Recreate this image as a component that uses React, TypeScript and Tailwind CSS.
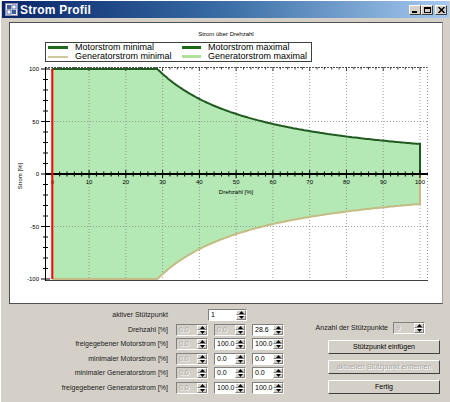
import React from 'react';

// Chart scale (page coordinates)
const X = (v: number) => 52.3 + v * 3.677;
const Y = (v: number) => 174 - v * 1.05;
const upper = (v: number) => (v <= 28.6 ? 100 : 2860 / v);

const range = (a: number, b: number, step: number) => {
  const out: number[] = [];
  for (let v = a; v <= b + 0.001; v += step) out.push(v);
  return out;
};

const SpinArrows = () => (
  <div className="flex flex-col w-[10px] h-full">
    <div className="flex-1 flex items-center justify-center bg-[#d4d0c8] border-t border-l border-t-white border-l-white border-b border-r border-b-[#808080] border-r-[#808080]">
      <svg width="5" height="3" viewBox="0 0 5 3"><path d="M0 3 L2.5 0 L5 3 Z" fill="#000" /></svg>
    </div>
    <div className="flex-1 flex items-center justify-center bg-[#d4d0c8] border-t border-l border-t-white border-l-white border-b border-r border-b-[#808080] border-r-[#808080]">
      <svg width="5" height="3" viewBox="0 0 5 3"><path d="M0 0 L2.5 3 L5 0 Z" fill="#000" /></svg>
    </div>
  </div>
);

const SpinBox = ({ value, disabled, className }: { value: string; disabled?: boolean; className?: string }) => (
  <div
    className={`flex h-[12px] border-t border-l border-t-[#808080] border-l-[#808080] border-b border-r border-b-white border-r-white ${
      disabled ? 'bg-[#d4d0c8]' : 'bg-white'
    } ${className ?? 'w-[32px]'}`}
  >
    <div
      className={`flex-1 pl-[2px] text-[7px] leading-[10px] overflow-hidden ${
        disabled ? 'text-[#a8a8a8] [text-shadow:1px_1px_0_#fff]' : 'text-black'
      }`}
    >
      {value}
    </div>
    <SpinArrows />
  </div>
);

const WinButton = ({ label, disabled }: { label: string; disabled?: boolean }) => (
  <div className="h-[14px] w-[112px] bg-[#d4d0c8] border-t border-l border-t-white border-l-white border-b border-r border-b-[#404040] border-r-[#404040] flex items-center justify-center">
    <span
      className={`text-[7px] leading-[8px] ${
        disabled ? 'text-[#a8a8a8] [text-shadow:1px_1px_0_#fff]' : 'text-black'
      }`}
    >
      {label}
    </span>
  </div>
);

const CaptionButton = ({ children }: { children: React.ReactNode }) => (
  <div className="w-[12px] h-[10px] bg-[#d4d0c8] border-t border-l border-t-white border-l-white border-b border-r border-b-[#404040] border-r-[#404040] flex items-center justify-center">
    {children}
  </div>
);

const rows = [
  { label: 'Drehzahl [%]', values: ['0.0', '0.0', '28.6'] },
  { label: 'freigegebener Motorstrom [%]', values: ['0.0', '100.0', '100.0'] },
  { label: 'minimaler Motorstrom [%]', values: ['0.0', '0.0', '0.0'] },
  { label: 'minimaler Generatorstrom [%]', values: ['0.0', '0.0', '0.0'] },
  { label: 'freigegebener Generatorstrom [%]', values: ['0.0', '100.0', '100.0'] },
];

const Chart = () => {
  const pts = range(0, 100, 0.5);
  const upperPts = pts.map((v) => `${X(v).toFixed(1)},${Y(upper(v)).toFixed(1)}`);
  const lowerPts = pts.map((v) => `${X(v).toFixed(1)},${Y(-upper(v)).toFixed(1)}`);
  const fill = `M${upperPts.join(' L')} L${lowerPts.slice().reverse().join(' L')} Z`;
  const upLine = `M${upperPts.join(' L')} L${X(100)},${Y(0)}`;
  const lowLine = `M${lowerPts.join(' L')} L${X(100)},${Y(0)}`;

  return (
    <svg width="431" height="240" viewBox="0 0 431 240" className="block">
      <g transform="translate(-10,-62)">
        {/* fill */}
        <path d={fill} fill="#b4e8b4" />
        {/* grid */}
        {range(0, 100, 10).map((v) => (
          <line key={`gx${v}`} x1={X(v)} x2={X(v)} y1={67} y2={281} stroke="#8a8a8a" strokeWidth="1" strokeDasharray="1 2" opacity="0.8" />
        ))}
        {[50, -50].map((v) => (
          <line key={`gy${v}`} x1={45} x2={428} y1={Y(v)} y2={Y(v)} stroke="#8a8a8a" strokeWidth="1" strokeDasharray="1 2" opacity="0.8" />
        ))}
        {/* frame */}
        <line x1={45} x2={428} y1={67.5} y2={67.5} stroke="#505050" strokeWidth="1" strokeDasharray="2 1" />
        <line x1={427.5} x2={427.5} y1={67} y2={281} stroke="#909090" strokeWidth="1" strokeDasharray="1 2" />
        <line x1={45} x2={428} y1={280.5} y2={280.5} stroke="#404040" strokeWidth="1" />
        {range(0, 100, 2).map((v) => (
          <line key={`tt${v}`} x1={X(v)} x2={X(v)} y1={67} y2={v % 10 === 0 ? 71 : 69.5} stroke="#404040" strokeWidth="1" />
        ))}
        {/* data lines */}
        <path d={lowLine} fill="none" stroke="#c4bc84" strokeWidth="2" />
        <path d={upLine} fill="none" stroke="#1f5a1f" strokeWidth="2" />
        {/* y axis */}
        <line x1={45.5} x2={45.5} y1={67} y2={281} stroke="#000" strokeWidth="1" />
        {range(-100, 100, 10).map((v) => (
          <line key={`yt${v}`} x1={v % 50 === 0 ? 41 : 43} x2={v % 50 === 0 ? 50 : 48} y1={Y(v)} y2={Y(v)} stroke="#000" strokeWidth="1" />
        ))}
        {[100, 50, 0, -50, -100].map((v) => (
          <text key={`yl${v}`} x={39} y={Y(v) + 2} fontSize="6" textAnchor="end" fill="#000">
            {v}
          </text>
        ))}
        {/* x axis */}
        <line x1={45} x2={428} y1={174} y2={174} stroke="#000" strokeWidth="2" />
        {range(0, 100, 2).map((v) => (
          <line key={`xt${v}`} x1={X(v)} x2={X(v)} y1={v % 10 === 0 ? 170 : 171.5} y2={v % 10 === 0 ? 178 : 176.5} stroke="#000" strokeWidth="1" />
        ))}
        {range(0, 100, 10).map((v) => (
          <text key={`xl${v}`} x={X(v)} y={184} fontSize="6" textAnchor="middle" fill="#000">
            {v}
          </text>
        ))}
        <text x={236} y={194} fontSize="6" textAnchor="middle" fill="#000">
          Drehzahl [%]
        </text>
        <text x={22} y={176} fontSize="6" textAnchor="middle" fill="#000" transform="rotate(-90 22 176)">
          Strom [%]
        </text>
        {/* red marker */}
        <line x1={X(0)} x2={X(0)} y1={Y(100)} y2={Y(-100)} stroke="#ff0000" strokeWidth="2" />
      </g>
    </svg>
  );
};

export default function App() {
  return (
    <div className="w-[450px] h-[402px] bg-[#d4d0c8] font-['Liberation_Sans',Arial,sans-serif] relative overflow-hidden border-l border-t border-l-[#ffffff] border-t-[#ffffff]">
      {/* Titelleiste */}
      <div className="mx-[1px] mt-[0px] h-[17px] bg-gradient-to-r from-[#0a246a] via-[#3a6ea5] to-[#a6caf0] flex items-center">
        <div className="w-[14px] h-[14px] ml-[2px] flex items-center justify-center">
          <svg width="13" height="13" viewBox="0 0 13 13">
            <rect x="0.5" y="0.5" width="12" height="12" fill="#e8e8f0" stroke="#9090a8" />
            <rect x="2" y="2" width="4" height="4" fill="#3a5a9a" />
            <rect x="7" y="2" width="4" height="4" fill="#ffffff" stroke="#3a5a9a" strokeWidth="0.8" />
            <rect x="2" y="7" width="4" height="4" fill="#ffffff" stroke="#3a5a9a" strokeWidth="0.8" />
            <rect x="7" y="7" width="4" height="4" fill="#3a5a9a" />
          </svg>
        </div>
        <span className="ml-[2px] text-white font-bold text-[12px] leading-[14px] tracking-[0.2px]">Strom Profil</span>
        <div className="ml-auto mr-[2px] flex items-center">
          <CaptionButton>
            <div className="w-[5px] h-[2px] bg-black mt-[4px] mr-[1px]" />
          </CaptionButton>
          <CaptionButton>
            <div className="w-[7px] h-[6px] border border-black border-t-2" />
          </CaptionButton>
          <div className="w-[2px]" />
          <CaptionButton>
            <svg width="7" height="6" viewBox="0 0 7 6">
              <path d="M0.5 0 L6.5 6 M6.5 0 L0.5 6" stroke="#000" strokeWidth="1.5" />
            </svg>
          </CaptionButton>
        </div>
      </div>

      {/* Diagramm */}
      <div className="mt-[4px] ml-[8px] w-[434px] h-[282px] bg-white border border-[#505050] border-r-[#a0a0a0] flex flex-col">
        <div className="h-[19px] pt-[8px] text-center text-[6px] leading-[6px] text-black">Strom über Drehzahl</div>
        <div className="ml-[35px] w-[267px] h-[20px] border border-[#404040] grid grid-cols-[134px_1fr] content-center px-[2px] text-[9px] leading-[9px] text-black">
          <div className="flex items-center gap-[7px]">
            <div className="w-[20px] h-[3px] bg-[#1f6a1f]" />
            <span>Motorstrom minimal</span>
          </div>
          <div className="flex items-center gap-[7px]">
            <div className="w-[19px] h-[3px] bg-[#1a6a1a]" />
            <span>Motorstrom maximal</span>
          </div>
          <div className="flex items-center gap-[7px]">
            <div className="w-[20px] h-[2px] bg-[#cfc89a]" />
            <span>Generatorstrom minimal</span>
          </div>
          <div className="flex items-center gap-[7px]">
            <div className="w-[19px] h-[3px] bg-[#b0e098]" />
            <span>Generatorstrom maximal</span>
          </div>
        </div>
        <Chart />
      </div>

      {/* Eingaben */}
      <div className="flex mt-[5px]">
        <div className="ml-[8px] grid grid-cols-[161px_32px_32px_32px] gap-x-[6px] gap-y-[2px] text-[7px] leading-[12px] text-[#202020]">
          <div className="text-right pr-[2px]">aktiver Stützpunkt</div>
          <div className="col-span-3">
            <SpinBox value="1" className="w-[39px] ml-[32px]" />
          </div>
          {rows.map((r) => (
            <React.Fragment key={r.label}>
              <div className="text-right pr-[2px]">{r.label}</div>
              <SpinBox value={r.values[0]} disabled />
              <SpinBox value={r.values[1]} disabled={r.label === 'Drehzahl [%]'} />
              <SpinBox value={r.values[2]} />
            </React.Fragment>
          ))}
        </div>
        <div className="ml-[28px] w-[128px] flex flex-col">
          <div className="mt-[13px] flex items-center justify-end pr-[15px] gap-[5px]">
            <span className="text-[7px] leading-[12px] text-[#202020]">Anzahl der Stützpunkte</span>
            <SpinBox value="9" disabled />
          </div>
          <div className="ml-[16px] mt-[6px] flex flex-col gap-[6px]">
            <WinButton label="Stützpunkt einfügen" />
            <WinButton label="aktuellen Stützpunkt entfernen" disabled />
            <WinButton label="Fertig" />
          </div>
        </div>
      </div>
    </div>
  );
}
